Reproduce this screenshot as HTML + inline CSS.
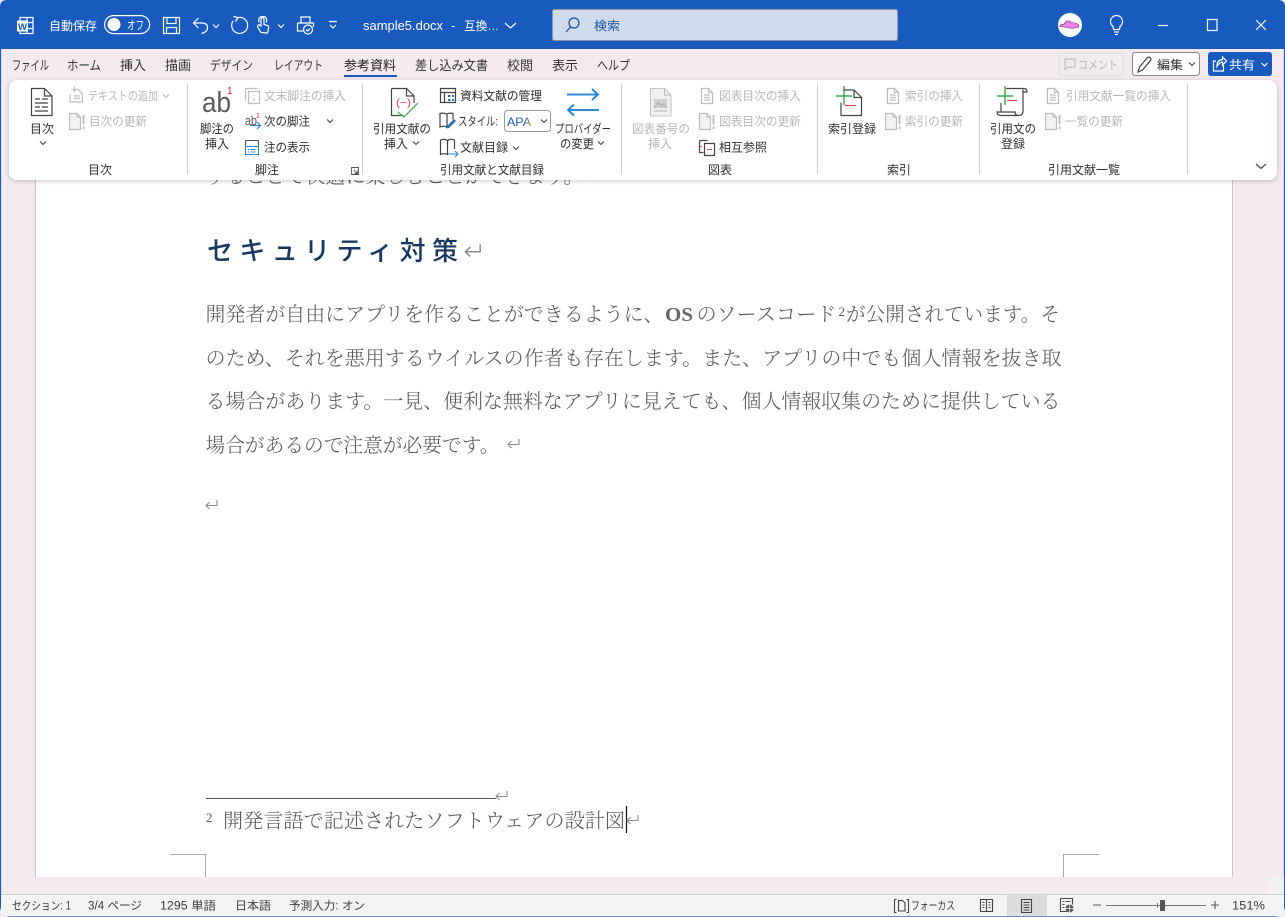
<!DOCTYPE html>
<html lang="ja"><head><meta charset="utf-8"><title>sample5.docx</title>
<style>
html,body{margin:0;padding:0;background:#f3e9ef;width:1285px;height:917px;overflow:hidden}
svg{display:block}
text{font-family:"Liberation Sans","Noto Sans CJK JP",sans-serif;font-size:12px;fill:#2e2e2e}
.w{fill:#fff}.d{fill:#b8b8b8}.t{font-size:13px;fill:#333}.s{font-size:11.5px;fill:#3c3c3c}
.b{font-family:"Liberation Serif","Noto Serif CJK JP","Noto Serif CJK SC",serif;font-size:20px;fill:#585858;font-weight:300}
.h{font-size:26px;fill:#17375e;font-weight:500}
.g{fill:none;stroke:#bdbdbd;stroke-width:1.2}.k{fill:none;stroke:#444;stroke-width:1.2}
.wl{fill:none;stroke:#fff;stroke-width:1.2}.c{fill:none;stroke:#444;stroke-width:1.1}
</style></head><body>
<svg width="1285" height="917" viewBox="0 0 1285 917" xmlns="http://www.w3.org/2000/svg">
<defs>
<filter id="sh" x="-2%" y="-10%" width="104%" height="125%"><feDropShadow dx="0" dy="1" stdDeviation="2" flood-color="#000" flood-opacity=".22"/></filter>
<linearGradient id="apa" x1="0" x2="1"><stop offset="0" stop-color="#1b5fc4"/><stop offset=".7" stop-color="#1b5fc4"/><stop offset="1" stop-color="#c77b20"/></linearGradient>
<path id="ret" d="M12 1v5.500H1M4.500 3L1 6.500L4.500 10" fill="none" stroke="#8c8c8c" stroke-width="1.100"/>
<g id="chev"><path d="M-3-1.500L0 1.500L3-1.500" fill="none" stroke="#444" stroke-width="1.100"/></g>
<g id="chevd"><path d="M-3-1.500L0 1.500L3-1.500" fill="none" stroke="#b8b8b8" stroke-width="1.100"/></g>
<g id="upd"><path d="M.5.500h7.500l3.500 3.500v12.500h-11z" fill="#f2f2f2" stroke="#bdbdbd" stroke-width="1.200"/><path d="M8 .500v3.500h3.500" class="g"/><path d="M14.500 2v9.500M14.500 13.500v2.500" stroke="#bdbdbd" stroke-width="1.800" fill="none"/></g>
<g id="ins"><path class="g" d="M.5.500h7l4 4v11h-11zM7.500.500v4h4M3 7h6M3 9.500h6M3 12h6"/></g>
</defs>

<rect width="1285" height="917" fill="#f3e9ef"/>
<!-- document page -->
<rect x="36" y="170" width="1196" height="707" fill="#fff"/>
<path d="M35.500 170V877M1232.500 170V877" stroke="#c6c6c6" fill="none"/>
<text class="b" x="205.500" y="183" textLength="378" lengthAdjust="spacingAndGlyphs">することで快適に楽しむことができます。</text>
<use href="#ret" x="587" y="170"/>
<text class="h" x="207" y="260" textLength="251">セキュリティ対策</text>
<use href="#ret" transform="translate(464 243) scale(1.35)"/>
<text class="b" x="205.500" y="321" textLength="458" lengthAdjust="spacingAndGlyphs">開発者が自由にアプリを作ることができるように、</text>
<text class="b" x="665" y="321" style="font-weight:700;fill:#666" textLength="28" lengthAdjust="spacingAndGlyphs">OS</text>
<text class="b" x="696.500" y="321" textLength="140" lengthAdjust="spacingAndGlyphs">のソースコード</text>
<text class="b" x="838.500" y="316" style="font-size:13px">2</text>
<text class="b" x="846" y="321" textLength="214" lengthAdjust="spacingAndGlyphs">が公開されています。そ</text>
<text class="b" x="205.500" y="365" textLength="856" lengthAdjust="spacingAndGlyphs">のため、それを悪用するウイルスの作者も存在します。また、アプリの中でも個人情報を抜き取</text>
<text class="b" x="205.500" y="408" textLength="855" lengthAdjust="spacingAndGlyphs">る場合があります。一見、便利な無料なアプリに見えても、個人情報収集のために提供している</text>
<text class="b" x="205.500" y="452" textLength="294" lengthAdjust="spacingAndGlyphs">場合があるので注意が必要です。</text>
<use href="#ret" x="507" y="438"/>
<use href="#ret" x="205" y="499"/>
<path d="M206 798.500H496" stroke="#555" fill="none"/>
<use href="#ret" x="495" y="790"/>
<text class="b" x="206" y="822" style="font-size:13px">2</text>
<text class="b" x="223" y="827.500" textLength="402" lengthAdjust="spacingAndGlyphs">開発言語で記述されたソフトウェアの設計図</text>
<path d="M626.500 806V833" stroke="#111" stroke-width="1.200"/>
<use href="#ret" x="626" y="814"/>
<path d="M170 854.500H205.500V877M1099 854.500H1063.500V877" stroke="#a8a8a8" fill="none"/>

<!-- title bar -->
<path d="M0 49V7Q0 0 7 0H1278Q1285 0 1285 7V49z" fill="#185abd"/>
<rect x="0" y="49" width="1285" height="31" fill="#f3e9ef"/>
<path d="M.5 49V904Q.5 916 10 916H1275Q1284.500 916 1284.500 904V49" fill="none" stroke="#185abd" stroke-width="1.200"/>
<!-- word icon -->
<path d="M20 17.500h13v16h-13zM27 17.500v16M27 22.500h6M27 28.500h6" class="wl"/>
<rect x="17" y="20.500" width="11" height="11" fill="#fff"/>
<text x="18" y="30" style="font-size:9.500px;font-weight:700;fill:#185abd">W</text>
<text class="w" x="49" y="30" textLength="48" lengthAdjust="spacingAndGlyphs">自動保存</text>
<rect x="104.600" y="15.600" width="45" height="18" rx="9" class="wl"/>
<circle cx="114" cy="24.500" r="6.500" fill="#fff"/>
<text class="w" x="127" y="29.500" textLength="17" lengthAdjust="spacingAndGlyphs">オフ</text>
<path d="M163.500 17.500h16v16h-16zM167 17.500v6h9v-6M166.500 33.500v-6h10v6" class="wl"/>
<path d="M198.500 18l-5 5 5 5M193.500 23h8q6 0 6 4.500t-6 6" class="wl"/>
<path d="M213 24.500l3 3 3-3" class="wl"/>
<path d="M233 21A8 8 0 1 0 238.500 17.500M233.500 16.500l4.500 1-2.500 4" class="wl"/>
<path d="M261 32.500q-2-3-3-5t.5-2.500 2.500 1.500v-7q0-2 1.500-2t1.500 2v5l3.500 1q1.500.5 1 3l-1 4.500z" class="wl"/>
<path d="M259 22.500q-1.500-5.500 3.500-6t4 6" class="wl"/>
<path d="M278 24.500l3 3 3-3" class="wl"/>
<path d="M301 23v-6h9v6M297.500 23h16v4M303 31h-5.500v-8" class="wl"/>
<circle cx="308" cy="29.500" r="4.500" class="wl"/><path d="M306 29.500l1.500 1.500 2.500-2.500" class="wl"/>
<path d="M329 21.500h8M330 25l3 3 3-3" class="wl"/>
<text class="w" x="363" y="30" textLength="80" lengthAdjust="spacingAndGlyphs" style="font-size:13px">sample5.docx</text>
<text class="w" x="451" y="30" style="font-size:13px">-</text>
<text class="w" x="464" y="30" textLength="35" lengthAdjust="spacingAndGlyphs">互換…</text>
<path d="M505 23l5.500 5 5.500-5" class="wl"/>
<!-- search -->
<rect x="552.500" y="9.500" width="345" height="31" rx="2" fill="#cfdbec" stroke="#8e99a8"/>
<circle cx="574" cy="23" r="5" fill="none" stroke="#1a4f9c" stroke-width="1.200"/><path d="M570.500 27l-4.500 5" stroke="#1a4f9c" stroke-width="1.200"/>
<text x="594" y="30" textLength="26" lengthAdjust="spacingAndGlyphs" style="fill:#1a4f9c">検索</text>
<!-- right title -->
<circle cx="1070" cy="25" r="12" fill="#fff"/>
<path d="M1060 25l4-1 2-3h4l1 1.500q6 0 8 3l-1 2q-5 1-9 .500l-5-1-4-.500z" fill="#ee80ee" stroke="#5a3358" stroke-width=".6"/>
<path d="M1113 28q-2.500-2-2.500-5a6 6 0 0 1 12 0q0 3-2.500 5l-.5 3h-6zM1114 33.500h5M1115 36h3" class="wl" transform="translate(0 -1.500)"/>
<path d="M1158 25.500h10M1207.500 19.500h9.500v11h-9.500zM1256 20l10 10M1266 20l-10 10" class="wl"/>

<!-- tabs -->
<text class="t" x="12" y="70" textLength="37" lengthAdjust="spacingAndGlyphs">ファイル</text>
<text class="t" x="67" y="70" textLength="34" lengthAdjust="spacingAndGlyphs">ホーム</text>
<text class="t" x="120" y="70" textLength="26" lengthAdjust="spacingAndGlyphs">挿入</text>
<text class="t" x="165" y="70" textLength="26" lengthAdjust="spacingAndGlyphs">描画</text>
<text class="t" x="210" y="70" textLength="43" lengthAdjust="spacingAndGlyphs">デザイン</text>
<text class="t" x="274" y="70" textLength="49" lengthAdjust="spacingAndGlyphs">レイアウト</text>
<text class="t" x="344" y="70" textLength="52" lengthAdjust="spacingAndGlyphs" style="fill:#222">参考資料</text>
<rect x="344" y="75" width="53" height="2" fill="#185abd"/>
<text class="t" x="415" y="70" textLength="73" lengthAdjust="spacingAndGlyphs">差し込み文書</text>
<text class="t" x="507" y="70" textLength="26" lengthAdjust="spacingAndGlyphs">校閲</text>
<text class="t" x="552" y="70" textLength="26" lengthAdjust="spacingAndGlyphs">表示</text>
<text class="t" x="597" y="70" textLength="33" lengthAdjust="spacingAndGlyphs">ヘルプ</text>
<!-- right buttons -->
<rect x="1059.500" y="53.500" width="64" height="22" rx="3" fill="#f0ebee" stroke="#dedede"/>
<path d="M1065 59h10v8h-7l-3 2.500z" class="g"/>
<text class="d" x="1078" y="69" textLength="40" lengthAdjust="spacingAndGlyphs">コメント</text>
<rect x="1132.500" y="52.500" width="67" height="23" rx="3" fill="#fff" stroke="#8a8a8a"/>
<path d="M1138 72l1.500-5 8-9.500q2-1 3 .5t0 2.500l-8 9.500z" class="k"/>
<text x="1157" y="69" textLength="26" lengthAdjust="spacingAndGlyphs">編集</text>
<use href="#chev" x="1192" y="64"/>
<rect x="1208" y="52" width="64" height="24" rx="3" fill="#185abd"/>
<path d="M1216 61h-2.500v10h10v-6M1217 66q0-6 5.500-6.500v-2.500l4 4-4 4v-3q-3 0-5.500 4.500z" class="wl"/>
<text class="w" x="1229" y="69" textLength="26" lengthAdjust="spacingAndGlyphs">共有</text>
<path d="M1261.500 63l3 3 3-3" class="wl"/>

<!-- ribbon -->
<rect x="9" y="80" width="1268" height="100" rx="8" fill="#fff" filter="url(#sh)"/>
<path d="M187.500 84v90M362.500 84v90M621.500 84v90M817.500 84v90M979.500 84v90M1187.500 84v90" stroke="#d0d0d0" fill="none"/>
<!-- group labels -->
<text x="88" y="174" textLength="24" lengthAdjust="spacingAndGlyphs">目次</text>
<text x="255" y="174" textLength="24" lengthAdjust="spacingAndGlyphs">脚注</text>
<text x="440" y="174" textLength="104" lengthAdjust="spacingAndGlyphs">引用文献と文献目録</text>
<text x="708" y="174" textLength="24" lengthAdjust="spacingAndGlyphs">図表</text>
<text x="887" y="174" textLength="24" lengthAdjust="spacingAndGlyphs">索引</text>
<text x="1048" y="174" textLength="72" lengthAdjust="spacingAndGlyphs">引用文献一覧</text>
<path d="M351.500 167.500h7v7h-7zM354 170l3.500 3.500M354.500 173.500h3v-3" fill="none" stroke="#555" stroke-width=".9"/>
<path d="M1256 164l5 4.500 5-4.500" fill="none" stroke="#444" stroke-width="1.200"/>

<!-- toc group -->
<path d="M31.500 88.500h13l7.500 7.500v19.500h-20.500zM44.500 88.500v7.500h7.500M35 99h5M42 99h6M35 103h13M35 107h5M42 107h6M35 111h13" class="k"/>
<text x="30" y="133" textLength="24" lengthAdjust="spacingAndGlyphs">目次</text>
<use href="#chev" x="43" y="143"/>
<path d="M74.500 86.500v6M71.500 89.500h6" class="g"/>
<path d="M74 89.500h4l4.500 4.500V102h-12.500v-8M74 96h6M74 98.500h6" class="g"/>
<text class="d" x="88" y="100" textLength="70" lengthAdjust="spacingAndGlyphs">テキストの追加</text>
<use href="#chevd" x="166" y="96"/>
<use href="#upd" x="69" y="113"/>
<text class="d" x="89" y="125.500" textLength="58" lengthAdjust="spacingAndGlyphs">目次の更新</text>
<!-- footnote group -->
<text x="202" y="112" style="font-family:'Liberation Sans',sans-serif;font-size:29px;fill:#5a5a5a" textLength="29" lengthAdjust="spacingAndGlyphs">ab</text>
<text x="227" y="94" style="font-size:10px;fill:#e81123">1</text>
<text x="200" y="133" textLength="34" lengthAdjust="spacingAndGlyphs">脚注の</text>
<text x="205" y="148" textLength="24" lengthAdjust="spacingAndGlyphs">挿入</text>
<path d="M245.500 88.500h12M245.500 88.500v12M248.500 91.500h11v12h-11z" class="g"/><path d="M254 95v1M254 98v3" class="g"/>
<text class="d" x="264" y="100" textLength="82" lengthAdjust="spacingAndGlyphs">文末脚注の挿入</text>
<text x="245" y="125" style="font-size:13px;fill:#555" textLength="12" lengthAdjust="spacingAndGlyphs">ab</text>
<text x="256" y="118" style="font-size:7px;fill:#e81123">1</text>
<path d="M250 125.500h10M257 122l3.500 3.500-3.500 3.500" fill="none" stroke="#2b88d8" stroke-width="1.200"/>
<text x="264" y="125.500" textLength="46" lengthAdjust="spacingAndGlyphs">次の脚注</text>
<use href="#chev" x="330" y="121"/>
<path d="M245.500 140.500h13v14h-13zM245.500 146.500h13" fill="none" stroke="#555"/><path d="M245.500 146.500h13v8h-13zM248 149.500h1M250.500 149.500h5M248 152h1M250.500 152h5" fill="none" stroke="#2b88d8"/>
<text x="264" y="151.500" textLength="46" lengthAdjust="spacingAndGlyphs">注の表示</text>
<!-- citation group -->
<path d="M391.500 88.500h15l7.500 7.500v7M391.500 88.500v27h12M406.500 88.500v7.500h7.500" class="k"/>
<text x="396" y="106" style="font-size:10.500px;fill:#e04040" textLength="15" lengthAdjust="spacingAndGlyphs">(−)</text>
<path d="M398 112l6 5 14-14" fill="none" stroke="#4caf50" stroke-width="1.300"/>
<text x="373" y="133" textLength="58" lengthAdjust="spacingAndGlyphs">引用文献の</text>
<text x="384" y="148" textLength="24" lengthAdjust="spacingAndGlyphs">挿入</text>
<use href="#chev" x="416" y="143"/>
<path d="M440.500 88.500h15v14h-15zM440.500 92.500h15M444.500 92.500v10" class="k"/>
<path d="M448 95h2.500v2h-2.500zM452 95h2v2h-2zM448 99h2.500v2h-2.500zM452 99h2v2h-2z" fill="#2b6cb0"/>
<text x="460" y="100" textLength="82" lengthAdjust="spacingAndGlyphs">資料文献の管理</text>
<path d="M440 113.500q3-1 7 .5v13q-3-1.500-7 0zM447 114q3-1.500 6-.5v6" class="k"/>
<path d="M446 128q0-3 2-3l6-6 2 2-6 6q-1 2-4 1z" fill="#2b6cb0"/>
<text x="458" y="125.500" textLength="40" lengthAdjust="spacingAndGlyphs">スタイル:</text>
<rect x="504.500" y="110.500" width="46" height="21" rx="3" fill="#fff" stroke="#9a9a9a"/>
<text x="507" y="126" style="fill:url(#apa)" textLength="24" lengthAdjust="spacingAndGlyphs">APA</text>
<use href="#chev" x="544" y="121"/>
<path d="M440.500 140q4-1.500 7 .5v14q-3-1.500-7 0zM447.500 140.500q3-2 7-.5v9" class="k"/>
<path d="M448 154h10M455 151l3 3-3 3" fill="none" stroke="#2b88d8" stroke-width="1.100"/>
<text x="460" y="151.500" textLength="48" lengthAdjust="spacingAndGlyphs">文献目録</text>
<use href="#chev" x="516" y="148"/>
<path d="M567 94.500h31M592 89l6 5.500-6 5.500M599 110h-31M574 104.500l-6 5.500 6 5.500" fill="none" stroke="#2b88d8" stroke-width="2"/>
<text x="555" y="133" textLength="56" lengthAdjust="spacingAndGlyphs">プロバイダー</text>
<text x="560" y="148" textLength="34" lengthAdjust="spacingAndGlyphs">の変更</text>
<use href="#chev" x="601" y="143"/>
<!-- captions -->
<path d="M650.500 88.500h14l6.500 6.500v21h-20.500z" fill="#f0f0f0" stroke="#c4c4c4"/><path d="M664.500 88.500v6.500h6.500" class="g"/>
<rect x="654" y="99" width="13" height="9" fill="#d0d0d0"/><path d="M654 108l4-5 3 3 2-2 4 4" fill="none" stroke="#aaa"/><path d="M654 111h13" class="g"/>
<text class="d" x="632" y="133" textLength="58" lengthAdjust="spacingAndGlyphs">図表番号の</text>
<text class="d" x="648" y="148" textLength="24" lengthAdjust="spacingAndGlyphs">挿入</text>
<use href="#ins" x="701" y="88"/>
<text class="d" x="719" y="100" textLength="82" lengthAdjust="spacingAndGlyphs">図表目次の挿入</text>
<use href="#upd" x="699" y="113"/>
<text class="d" x="719" y="125.500" textLength="82" lengthAdjust="spacingAndGlyphs">図表目次の更新</text>
<path d="M699.500 140.500h8M699.500 140.500v12h4M704.500 143.500h10v12h-10z" class="k"/><path d="M707 149.500h5M700 146.500h2" stroke="#e04040" fill="none"/>
<text x="719" y="151.500" textLength="48" lengthAdjust="spacingAndGlyphs">相互参照</text>
<!-- index -->
<path d="M843 90h11l7.500 7.500v18h-20.500v-13M854 90v7.500h7.500" class="k"/>
<path d="M836 96h16M844 86v19" stroke="#3fa34d" stroke-width="1.400" fill="none"/>
<path d="M845 105.500h11" stroke="#e04040" stroke-width="1.100"/>
<text x="828" y="133" textLength="48" lengthAdjust="spacingAndGlyphs">索引登録</text>
<use href="#ins" x="887" y="88"/>
<text class="d" x="905" y="100" textLength="58" lengthAdjust="spacingAndGlyphs">索引の挿入</text>
<use href="#upd" x="885" y="113"/>
<text class="d" x="905" y="125.500" textLength="58" lengthAdjust="spacingAndGlyphs">索引の更新</text>
<!-- citations table -->
<path d="M1006 88.500h18q3 0 3 3.500h-4M1023 89.500v21q0 5-4 5h-18q-4 0-4-3.500h18q0 3.500 4 3.500M1001 112v-9" class="k"/>
<path d="M997 96h16M1005 86v19" stroke="#3fa34d" stroke-width="1.400" fill="none"/>
<path d="M1007 100.500h10" stroke="#e04040" stroke-width="1.100"/>
<text x="990" y="133" textLength="46" lengthAdjust="spacingAndGlyphs">引用文の</text>
<text x="1001" y="148" textLength="24" lengthAdjust="spacingAndGlyphs">登録</text>
<use href="#ins" x="1047" y="88"/>
<text class="d" x="1066" y="100" textLength="105" lengthAdjust="spacingAndGlyphs">引用文献一覧の挿入</text>
<use href="#upd" x="1045" y="113"/>
<text class="d" x="1065" y="125.500" textLength="58" lengthAdjust="spacingAndGlyphs">一覧の更新</text>

<!-- status bar -->
<rect x="1" y="894" width="1283" height="22" fill="#f3f3f3"/>
<path d="M1 894.500H1284" stroke="#cfcfcf"/>
<rect x="1267" y="877" width="17" height="17" fill="#f0f0f0"/>
<text class="s" x="12" y="909.500" textLength="59" lengthAdjust="spacingAndGlyphs">セクション: 1</text>
<text class="s" x="88" y="909.500" textLength="54" lengthAdjust="spacingAndGlyphs">3/4 ページ</text>
<text class="s" x="160" y="909.500" textLength="56" lengthAdjust="spacingAndGlyphs">1295 単語</text>
<text class="s" x="235" y="909.500" textLength="36" lengthAdjust="spacingAndGlyphs">日本語</text>
<text class="s" x="289" y="909.500" textLength="76" lengthAdjust="spacingAndGlyphs">予測入力: オン</text>
<path d="M896.500 899.500h-2v13h2M906.500 899.500h2v13h-2M898.500 900.500h4l2.500 2.500v8h-6.500z" class="c"/>
<text class="s" x="911" y="909.500" textLength="44" lengthAdjust="spacingAndGlyphs">フォーカス</text>
<path d="M980.500 899.500h12v12h-12zM986.500 899.500v12M982.500 902.500h2M982.500 905h2M982.500 907.500h2M988.500 902.500h2M988.500 905h2M988.500 907.500h2" class="c"/>
<rect x="1007" y="895" width="40" height="21" fill="#dcdcdc"/>
<path d="M1021.500 899.500h10v13h-10zM1023.500 902.500h6M1023.500 905h6M1023.500 907.500h6M1023.500 910h6" class="c"/>
<path d="M1060.500 898.500h12v6M1060.500 898.500v13h6M1062.500 901.500h2M1065.500 901.500h5M1062.500 904.500h2M1062.500 907.500h2" class="c"/>
<circle cx="1069.500" cy="908.500" r="4" fill="#555"/><path d="M1065.500 908.500h8M1069.500 904.500v8" stroke="#fff" stroke-width=".7"/>
<path d="M1093 905h8M1211 905h8M1215 901v8" stroke="#555" stroke-width="1.100" fill="none"/>
<path d="M1106 905.500h100M1157.500 903v5" stroke="#777" fill="none"/>
<rect x="1160" y="900" width="5" height="11" fill="#555"/>
<text class="s" x="1232" y="909.500" textLength="33" lengthAdjust="spacingAndGlyphs">151%</text>
</svg>
</body></html>
